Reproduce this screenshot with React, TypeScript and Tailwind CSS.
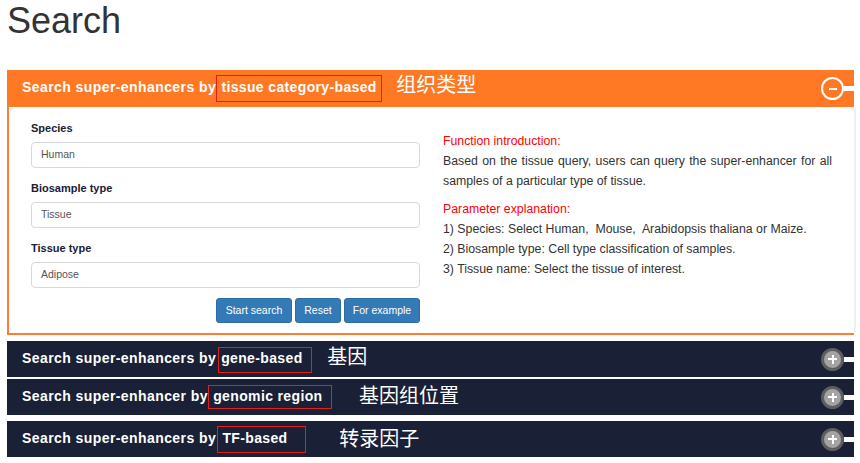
const font = "font-['Liberation_Sans','Noto_Sans_CJK_SC',sans-serif]"

function Toggle({ open }: { open?: boolean }) {
  if (open) {
    return (
      <div className="-mr-[1px] ml-auto flex items-center">
        <div className="flex h-[23px] w-[23px] items-center justify-center rounded-full border-2 border-white">
          <div className="h-[2px] w-[8px] bg-white" />
        </div>
        <div className="h-[5px] w-[11px] bg-white" />
      </div>
    )
  }
  return (
    <div className="-mr-[1px] ml-auto flex items-center">
      <div className="relative flex h-[23px] w-[23px] items-center justify-center rounded-full border-[3px] border-[#5e5e5e] bg-[#a3a3a3]">
        <div className="h-[2px] w-[9px] bg-white" />
        <div className="absolute h-[9px] w-[2px] bg-white" />
      </div>
      <div className="h-[5px] w-[11px] bg-white" />
    </div>
  )
}

function Header({
  text,
  boxed,
  boxClass,
  label,
  labelClass,
  rowClass,
  open,
}: {
  text: string
  boxed: string
  boxClass: string
  label: string
  labelClass: string
  rowClass: string
  open?: boolean
}) {
  return (
    <div className={`flex items-center pl-[15px] text-white ${rowClass}`}>
      <span className="whitespace-pre pb-[2px] text-[14px] font-bold tracking-[0.42px]">{text}</span>
      <span className={`flex items-center whitespace-pre border border-[#e02020] text-[14px] font-bold tracking-[0.36px] ${boxClass}`}>
        {boxed}
      </span>
      <span className={`whitespace-pre text-[20px] ${labelClass}`}>{label}</span>
      <Toggle open={open} />
    </div>
  )
}

function Field({ label, value }: { label: string; value: string }) {
  return (
    <div className="mb-[10px]">
      <div className="mb-[4px] h-[20px] text-[11px] font-bold leading-[20px] text-[#1a2035]">{label}</div>
      <div className="flex h-[26px] items-center rounded-[4px] border border-[#d8d8d8] px-[9px] text-[10.5px] text-[#555555]">
        {value}
      </div>
    </div>
  )
}

function Btn({ children, width }: { children: string; width: string }) {
  return (
    <button className={`h-[25px] rounded-[3px] border border-[#2e6da4] bg-[#337ab7] text-[10.5px] text-white ${width}`}>
      {children}
    </button>
  )
}

export default function App() {
  return (
    <div className={`${font} h-[463px] w-[860px] overflow-hidden bg-white`}>
      <h1 className="ml-[7px] h-[70px] pt-[1px] text-[36px] leading-[40px] text-[#333333]">Search</h1>

      <div className="ml-[7px] w-[849px]">
        <div className="w-[847px]">
          <Header
            text="Search super-enhancers by"
            boxed=" tissue category-based"
            boxClass="h-[27px] w-[166px] pb-[2px]"
            label="组织类型"
            labelClass="ml-[14px] pb-[8px]"
            rowClass="h-[37px] bg-[#ff7824]"
            open
          />
        </div>
        <div className="flex">
          <div className="flex h-[228px] w-[847px] border-b-2 border-l-2 border-[#ff7d33] bg-white">
            <div className="w-[412px] pl-[22px] pr-[1px] pt-[11px]">
              <Field label="Species" value="Human" />
              <Field label="Biosample type" value="Tissue" />
              <Field label="Tissue type" value="Adipose" />
              <div className="mt-[2px] flex justify-end gap-[3px]">
                <Btn width="w-[76px]">Start search</Btn>
                <Btn width="w-[46px]">Reset</Btn>
                <Btn width="w-[76px]">For example</Btn>
              </div>
            </div>
            <div className="ml-[22px] w-[389px] pt-[24px] text-[12.3px] leading-[20px] text-[#333333]">
              <div className="text-[#ff0000]">Function introduction:</div>
              <p className="text-justify">
                Based on the tissue query, users can query the super-enhancer for all samples of a particular type of tissue.
              </p>
              <div className="mt-[8px] text-[#ff0000]">Parameter explanation:</div>
              <div className="whitespace-pre">1) Species: Select Human,  Mouse,  Arabidopsis thaliana or Maize.</div>
              <div>2) Biosample type: Cell type classification of samples.</div>
              <div>3) Tissue name: Select the tissue of interest.</div>
            </div>
          </div>
          <div className="h-[226px] w-[2px] bg-[#f0f0f0]" />
        </div>

        <div className="mt-[6px] flex w-[847px] flex-col">
          <Header
            text="Search super-enhancers by"
            boxed="gene-based"
            boxClass="ml-[2px] mt-[2px] h-[26px] w-[94px] pb-[4px] pl-[2px]"
            label="基因"
            labelClass="ml-[15px] pb-[4px]"
            rowClass="h-[36px] bg-[#1a2035]"
          />
          <Header
            text="Search super-enhancer by"
            boxed=" genomic region"
            boxClass="h-[24px] w-[124px] pb-[2px]"
            label="基因组位置"
            labelClass="ml-[27px] pb-[2px]"
            rowClass="mt-[2px] h-[36px] bg-[#1a2035]"
          />
          <Header
            text="Search super-enhancers by"
            boxed=" TF-based"
            boxClass="ml-[1px] h-[27px] w-[89px] pb-[2px]"
            label="转录因子"
            labelClass="ml-[33px]"
            rowClass="mt-[6px] h-[36px] bg-[#1a2035]"
          />
        </div>
      </div>
    </div>
  )
}
